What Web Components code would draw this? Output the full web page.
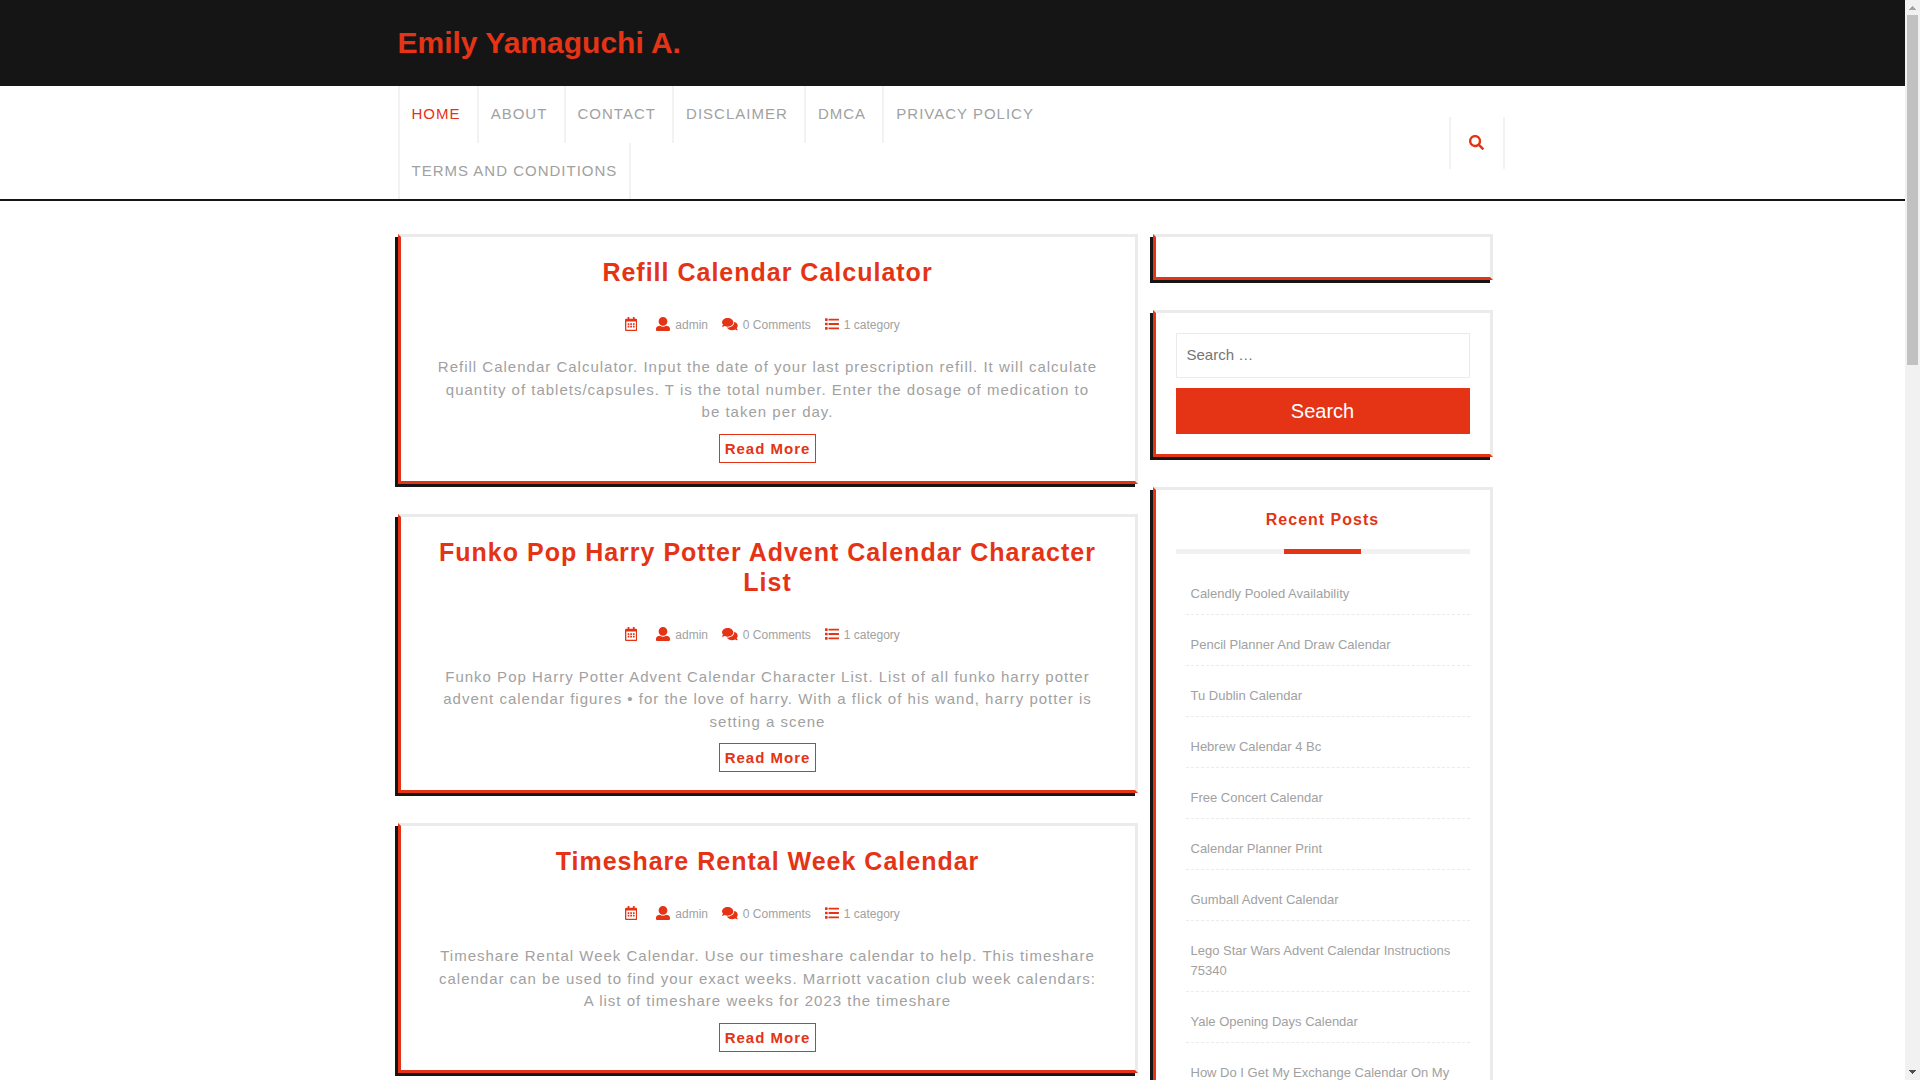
<!DOCTYPE html>
<html lang="en">
<head>
<meta charset="utf-8">
<title>Emily Yamaguchi A.</title>
<style>
  :root { --accent: #e53315; --ink: #151515; --muted: #a1a1a1; --line: #ebebeb; --rule: #f2f2f2; }
  html, body { height: 100%; margin: 0; }
  body { background: #fff; color: var(--muted); font: 15px/1.5 "Liberation Sans", Arial, sans-serif; }
</style>
</head>
<body>
<blog-app>
  <site-header>Emily Yamaguchi A.</site-header>
  <site-nav></site-nav>
  <blog-layout>
    <post-card heading="Refill Calendar Calculator">Refill Calendar Calculator. Input the date of your last prescription refill. It will calculate quantity of tablets/capsules. T is the total number. Enter the dosage of medication to be taken per day.</post-card>
    <post-card heading="Funko Pop Harry Potter Advent Calendar Character List">Funko Pop Harry Potter Advent Calendar Character List. List of all funko harry potter advent calendar figures • for the love of harry. With a flick of his wand, harry potter is setting a scene</post-card>
    <post-card heading="Timeshare Rental Week Calendar">Timeshare Rental Week Calendar. Use our timeshare calendar to help. This timeshare calendar can be used to find your exact weeks. Marriott vacation club week calendars: A list of timeshare weeks for 2023 the timeshare</post-card>
    <side-widget slot="aside"></side-widget>
    <side-widget slot="aside"><search-form></search-form></side-widget>
    <side-widget slot="aside"><recent-posts></recent-posts></side-widget>
  </blog-layout>
</blog-app>

<script>
const define = (name, render) => customElements.define(name, class extends HTMLElement {
  connectedCallback() {
    if (this.shadowRoot) return;
    const root = this.attachShadow({ mode: "open" });
    root.innerHTML = "<style>*{box-sizing:border-box}a{color:inherit;text-decoration:none}</style>" + render(this);
  }
});

const square = (y) => `M16 ${y + 96}h64c8.8 0 16-7.2 16-16V${y + 16}c0-8.8-7.2-16-16-16H16C7.2 ${y} 0 ${y + 7.2} 0 ${y + 16}v64c0 8.8 7.2 16 16 16z`;
const bar = (y) => `M128 ${y + 56}V${y + 16}c0-8.8 7.2-16 16-16h352c8.8 0 16 7.2 16 16v40c0 8.8-7.2 16-16 16H144c-8.8 0-16-7.2-16-16z`;
const icons = {
  calendar: [448, "M148 288h-40c-6.6 0-12-5.4-12-12v-40c0-6.6 5.4-12 12-12h40c6.6 0 12 5.4 12 12v40c0 6.6-5.4 12-12 12zm108-12v-40c0-6.6-5.4-12-12-12h-40c-6.6 0-12 5.4-12 12v40c0 6.6 5.4 12 12 12h40c6.6 0 12-5.4 12-12zm96 0v-40c0-6.6-5.4-12-12-12h-40c-6.6 0-12 5.4-12 12v40c0 6.6 5.4 12 12 12h40c6.6 0 12-5.4 12-12zm-96 96v-40c0-6.6-5.4-12-12-12h-40c-6.6 0-12 5.4-12 12v40c0 6.6 5.4 12 12 12h40c6.6 0 12-5.4 12-12zm-96 0v-40c0-6.6-5.4-12-12-12h-40c-6.6 0-12 5.4-12 12v40c0 6.6 5.4 12 12 12h40c6.6 0 12-5.4 12-12zm192 0v-40c0-6.6-5.4-12-12-12h-40c-6.6 0-12 5.4-12 12v40c0 6.6 5.4 12 12 12h40c6.6 0 12-5.4 12-12zm96-260v352c0 26.5-21.5 48-48 48H48c-26.5 0-48-21.5-48-48V112c0-26.5 21.5-48 48-48h48V12c0-6.6 5.4-12 12-12h40c6.6 0 12 5.4 12 12v52h128V12c0-6.6 5.4-12 12-12h40c6.6 0 12 5.4 12 12v52h48c26.5 0 48 21.5 48 48zm-48 346V160H48v298c0 3.3 2.7 6 6 6h340c3.3 0 6-2.7 6-6z"],
  user: [512, "M256 0c88.366 0 160 71.634 160 160s-71.634 160-160 160S96 248.366 96 160 167.634 0 256 0zm183.283 333.821l-71.313-17.828c-74.923 53.89-165.738 41.864-223.94 0l-71.313 17.828C29.981 344.505 0 382.903 0 426.955V464c0 26.51 21.49 48 48 48h416c26.51 0 48-21.49 48-48v-37.045c0-44.052-29.981-82.45-72.717-93.134z"],
  comments: [576, "M416 192c0-88.4-93.1-160-208-160S0 103.6 0 192c0 34.3 14.1 65.9 38 92-13.4 30.2-35.5 54.2-35.8 54.5-2.2 2.3-2.8 5.7-1.5 8.7S4.8 352 8 352c36.6 0 66.9-12.3 88.7-25 32.2 15.7 70.3 25 111.3 25 114.9 0 208-71.6 208-160zm122 220c23.9-26 38-57.7 38-92 0-66.9-53.5-124.2-129.3-148.1.9 6.6 1.3 13.3 1.3 20.1 0 105.9-107.7 192-240 192-10.8 0-21.3-.8-31.7-1.9C207.8 439.6 281.8 480 368 480c41 0 79.1-9.2 111.3-25 21.8 12.7 52.1 25 88.7 25 3.2 0 6.1-1.9 7.3-4.8 1.3-2.9.7-6.3-1.5-8.7-.3-.3-22.4-24.2-35.8-54.5z"],
  list: [512, [48, 208, 368].map(square).join("") + [60, 220, 380].map(bar).join("")],
  search: [512, "M505 442.7L405.3 343c-4.5-4.5-10.6-7-17-7H372c27.6-35.3 44-79.7 44-128C416 93.1 322.9 0 208 0S0 93.1 0 208s93.1 208 208 208c48.3 0 92.7-16.4 128-44v16.3c0 6.4 2.5 12.5 7 17l99.7 99.7c9.4 9.4 24.6 9.4 33.9 0l28.3-28.3c9.4-9.4 9.4-24.6.1-34zM208 336c-70.7 0-128-57.2-128-128 0-70.7 57.2-128 128-128 70.7 0 128 57.2 128 128 0 70.7-57.2 128-128 128z"]
};

define("fa-icon", (el) => {
  const [width, path] = icons[el.getAttribute("name")];
  return `<style>:host{display:inline-flex;height:14px;color:var(--accent)}svg{height:100%;fill:currentColor}</style>
    <svg viewBox="0 0 ${width} 512" aria-hidden="true"><path d="${path}"/></svg>`;
});

define("blog-app", () => `<style>
    :host{display:grid;grid-template-columns:minmax(0,1fr) auto;height:100vh}
    .page{overflow-y:auto;scrollbar-width:none}
  </style><div class="page"><slot></slot></div><scroll-track></scroll-track>`);

define("scroll-track", () => `<style>
    :host{display:flex;flex-direction:column;align-items:center;width:15px;background:#f1f1f1}
    svg{width:15px;height:15px;flex:none}
    .track{flex:1;width:11px}
    .thumb{height:calc(100% / 3);background:#c1c1c1}
  </style>
  <svg viewBox="0 0 15 15"><path d="M7 6h1v1h1v1h1v1h1v1H4V9h1V8h1V7h1z" fill="#a3a3a3"/></svg>
  <div class="track"><div class="thumb"></div></div>
  <svg viewBox="0 0 15 15"><path d="M4 5h7v1h-1v1H9v1H8v1H7V8H6V7H5V6H4z" fill="#505050"/></svg>`);

define("site-header", () => `<style>
    :host{display:block;background:var(--ink);padding:20px 0 21px}
    .inner{max-width:1140px;margin:0 auto;padding:0 15px}
    h1{margin:0;font-size:30px;line-height:45px;color:var(--accent)}
  </style><div class="inner"><h1><a href="#"><slot></slot></a></h1></div>`);

define("site-nav", () => `<style>
    :host{display:block;border-bottom:2px solid var(--ink)}
    .inner{display:flex;align-items:center;justify-content:space-between;max-width:1140px;margin:0 auto;padding:0 18px 0 15px}
    nav{flex:0 1 75%}
    ul{margin:0;padding:0;list-style:none}
    li{display:inline-block;vertical-align:top;border-left:2px solid var(--rule);padding:17px 12px;letter-spacing:1px;text-transform:uppercase}
    li:last-child{border-right:2px solid var(--rule)}
    .current{color:var(--accent)}
    button{display:flex;align-items:center;justify-content:center;width:56px;height:52px;padding:0;background:none;border:solid var(--rule);border-width:0 2px}
    fa-icon{height:15px}
  </style>
  <div class="inner">
    <nav><ul>${["Home", "About", "Contact", "Disclaimer", "DMCA", "Privacy Policy", "Terms And Conditions"]
      .map((t, i) => `<li><a href="#"${i ? "" : ' class="current"'}>${t}</a></li>`).join(" ")}</ul></nav>
    <button aria-label="Open search"><fa-icon name="search"></fa-icon></button>
  </div>`);

define("blog-layout", () => `<style>
    :host{display:grid;grid-template-columns:minmax(0,740fr) minmax(0,340fr);column-gap:15px;align-items:start;max-width:1140px;margin:0 auto;padding:33px 30px 0 15px;box-sizing:border-box}
    main,aside{display:flex;flex-direction:column;gap:30px;padding-bottom:30px}
  </style><main><slot></slot></main><aside><slot name="aside"></slot></aside>`);

const frame = "border:3px solid var(--line);border-left-color:var(--accent);border-bottom-color:var(--accent);box-shadow:-3px 3px 0 var(--ink);box-sizing:border-box;background:#fff";

define("post-card", (el) => `<style>
    :host{display:block;${frame};padding:20px 35px 18px;text-align:center;letter-spacing:1px}
    h2{margin:0 0 28px;font-size:25px;line-height:30px;color:var(--accent)}
    .meta{display:flex;justify-content:center;gap:4px;font-size:12px;line-height:20px;letter-spacing:0}
    .meta span{display:flex;align-items:center;gap:5px;margin-right:10px}
    fa-icon{margin-bottom:2px}
    p{margin:21px 0 10px}
    .more{display:inline-block;vertical-align:top;border:1px solid var(--accent);padding:5px;line-height:17px;font-weight:bold;color:var(--accent)}
  </style>
  <h2><a href="#">${el.getAttribute("heading")}</a></h2>
  <div class="meta">
    <span><fa-icon name="calendar"></fa-icon><a href="#" aria-label="Date"></a></span>
    <span><fa-icon name="user"></fa-icon><a href="#">admin</a></span>
    <span><fa-icon name="comments"></fa-icon>0 Comments</span>
    <span><fa-icon name="list"></fa-icon>1 category</span>
  </div>
  <p><slot></slot></p>
  <a class="more" href="#">Read More</a>`);

define("side-widget", () => `<style>:host{display:block;${frame};padding:20px}</style><slot></slot>`);

define("search-form", () => `<style>
    :host{display:block}
    form{display:flex;flex-direction:column;gap:10px}
    input{width:100%;height:45px;padding:0 10px 2px;border:1px solid var(--line);font:inherit;color:#555;outline:0}
    input::placeholder{color:#757575}
    button{height:46px;border:0;background:var(--accent);color:#fff;font:20px/30px "Liberation Sans",Arial,sans-serif}
  </style><form><input type="search" placeholder="Search …" aria-label="Search for"><button type="button">Search</button></form>`);

define("recent-posts", () => `<style>
    :host{display:block}
    h3{margin:0;font-size:16px;line-height:20px;letter-spacing:1px;text-align:center;color:var(--accent)}
    .bar{height:5px;margin:19px 0 10px;background:#f1f1f1}
    .bar::before{content:"";display:block;width:77px;height:100%;margin:0 auto;background:var(--accent)}
    ul{margin:0;padding:0 0 0 10px;list-style:none}
    li{padding:20px 5px 10px;border-bottom:1px dashed var(--line);font-size:13px;line-height:20px}
  </style>
  <h3>Recent Posts</h3><div class="bar"></div>
  <ul>${["Calendly Pooled Availability", "Pencil Planner And Draw Calendar", "Tu Dublin Calendar", "Hebrew Calendar 4 Bc", "Free Concert Calendar", "Calendar Planner Print", "Gumball Advent Calendar", "Lego Star Wars Advent Calendar Instructions 75340", "Yale Opening Days Calendar", "How Do I Get My Exchange Calendar On My"]
    .map((t) => `<li><a href="#">${t}</a></li>`).join("")}</ul>`);
</script>
</body>
</html>
